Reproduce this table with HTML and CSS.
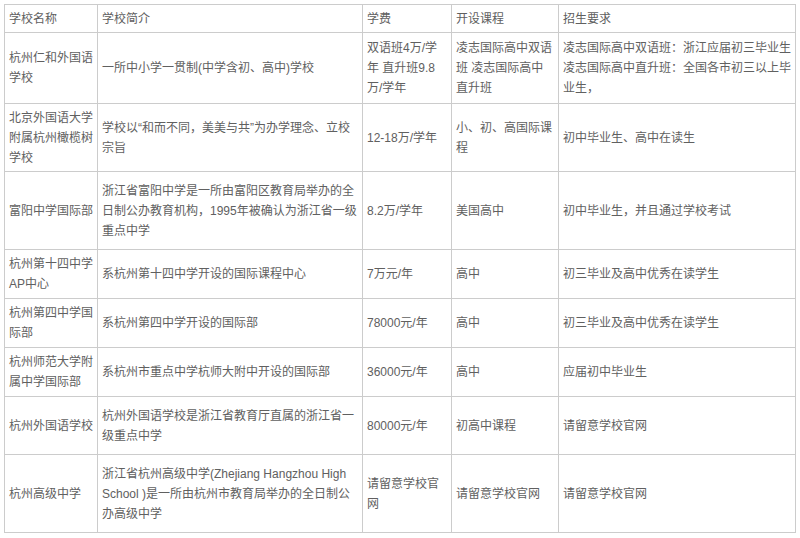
FILE: index.html
```html
<!DOCTYPE html>
<html lang="zh-CN">
<head>
<meta charset="utf-8">
<title>杭州国际学校一览</title>
<link rel="stylesheet" href="styles.css">
</head>
<body>
<table class="schools">
  <colgroup>
    <col class="c-name">
    <col class="c-intro">
    <col class="c-fee">
    <col class="c-course">
    <col class="c-req">
  </colgroup>
  <tbody>
    <tr class="h-head">
      <td>学校名称</td>
      <td>学校简介</td>
      <td>学费</td>
      <td>开设课程</td>
      <td>招生要求</td>
    </tr>
    <tr class="h-71">
      <td>杭州仁和外国语学校</td>
      <td>一所中小学一贯制(中学含初、高中)学校</td>
      <td>双语班4万/学年 直升班9.8万/学年</td>
      <td>凌志国际高中双语班 凌志国际高中直升班</td>
      <td>凌志国际高中双语班：浙江应届初三毕业生<br>凌志国际高中直升班：全国各市初三以上毕业生，</td>
    </tr>
    <tr class="h-68">
      <td>北京外国语大学附属杭州橄榄树学校</td>
      <td>学校以“和而不同，美美与共”为办学理念、立校宗旨</td>
      <td>12-18万/学年</td>
      <td>小、初、高国际课程</td>
      <td>初中毕业生、高中在读生</td>
    </tr>
    <tr class="h-78">
      <td>富阳中学国际部</td>
      <td>浙江省富阳中学是一所由富阳区教育局举办的全日制公办教育机构，1995年被确认为浙江省一级重点中学</td>
      <td>8.2万/学年</td>
      <td>美国高中</td>
      <td>初中毕业生，并且通过学校考试</td>
    </tr>
    <tr class="h-49">
      <td>杭州第十四中学AP中心</td>
      <td>系杭州第十四中学开设的国际课程中心</td>
      <td>7万元/年</td>
      <td>高中</td>
      <td>初三毕业及高中优秀在读学生</td>
    </tr>
    <tr class="h-49">
      <td>杭州第四中学国际部</td>
      <td>系杭州第四中学开设的国际部</td>
      <td>78000元/年</td>
      <td>高中</td>
      <td>初三毕业及高中优秀在读学生</td>
    </tr>
    <tr class="h-49">
      <td>杭州师范大学附属中学国际部</td>
      <td>系杭州市重点中学杭师大附中开设的国际部</td>
      <td>36000元/年</td>
      <td>高中</td>
      <td>应届初中毕业生</td>
    </tr>
    <tr class="h-58">
      <td>杭州外国语学校</td>
      <td>杭州外国语学校是浙江省教育厅直属的浙江省一级重点中学</td>
      <td>80000元/年</td>
      <td>初高中课程</td>
      <td>请留意学校官网</td>
    </tr>
    <tr class="h-78">
      <td>杭州高级中学</td>
      <td>浙江省杭州高级中学(Zhejiang Hangzhou High School )是一所由杭州市教育局举办的全日制公办高级中学</td>
      <td>请留意学校官网</td>
      <td>请留意学校官网</td>
      <td>请留意学校官网</td>
    </tr>
  </tbody>
</table>
</body>
</html>
```

FILE: styles.css
```css
html, body {
  margin: 0;
  padding: 0;
  background: #ffffff;
}

body {
  padding: 4px 0 0 4px;
  font-family: "Liberation Sans", "Noto Sans CJK SC", sans-serif;
  font-size: 12px;
  line-height: 20px;
  color: #606060;
}

.schools {
  border-collapse: collapse;
  table-layout: fixed;
  width: 792px;
}

.schools td {
  border: 1px solid #cccccc;
  padding: 0 3px 0 4px;
  vertical-align: middle;
  text-align: left;
  word-break: normal;
}

.c-name { width: 93px; }
.c-intro { width: 265px; }
.c-fee { width: 89px; }
.c-course { width: 107px; }
.c-req { width: 237px; }

.h-head { height: 28px; }
.h-71 { height: 71px; }
.h-68 { height: 68px; }
.h-78 { height: 78px; }
.h-49 { height: 49px; }
.h-58 { height: 58px; }
```
